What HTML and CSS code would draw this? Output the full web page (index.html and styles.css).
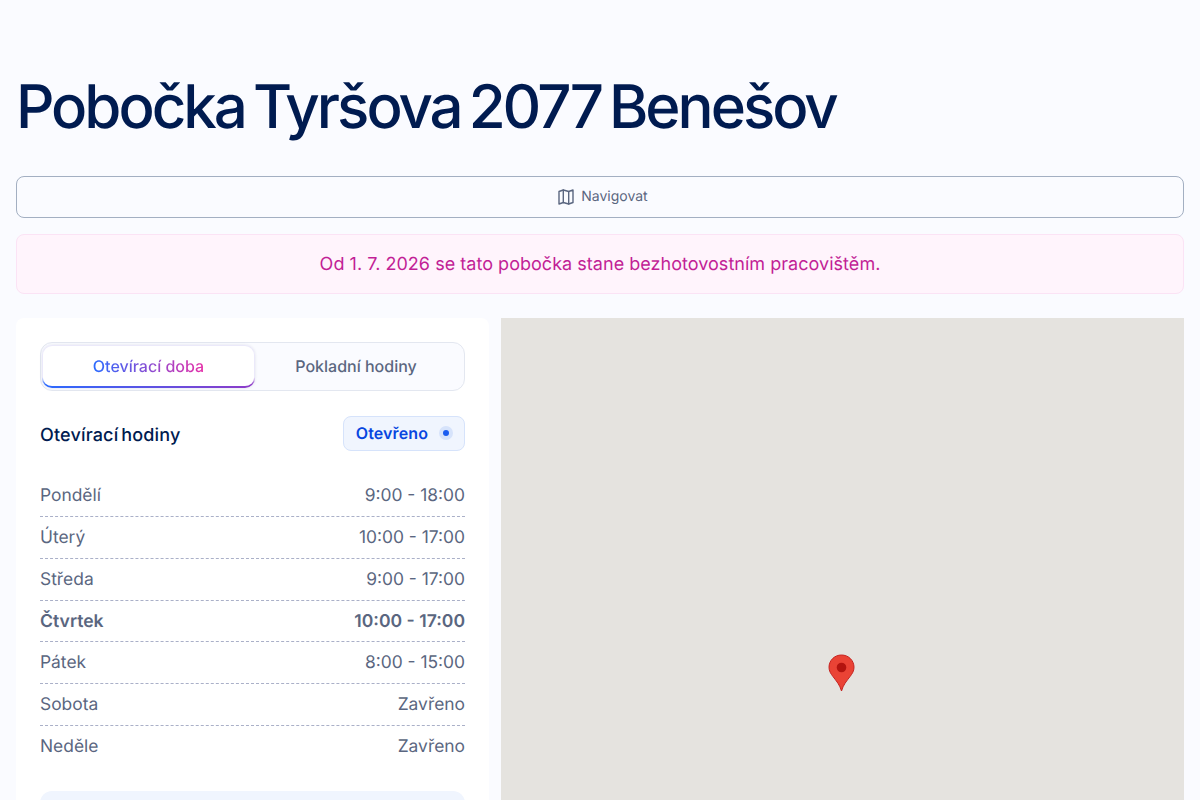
FILE: index.html
```html
<!DOCTYPE html>
<html lang="cs">
<head>
<meta charset="utf-8">
<title>Pobočka Tyršova 2077 Benešov</title>
<link rel="stylesheet" href="styles.css">
</head>
<body>
<main class="page">
  <h1 class="title">Pobočka Tyršova 2077 Benešov</h1>
  <a class="nav-btn" href="#">
    <svg class="nav-icon" viewBox="0 0 18 18" width="18" height="18" fill="none" stroke="currentColor" stroke-width="1.4" stroke-linejoin="round" stroke-linecap="round"><path d="M2 3.500 6.300 2l5.400 1.500L16 2v12.500L11.700 16l-5.400-1.500L2 16z"/><path d="M6.300 2v12.500M11.700 3.500V16"/></svg>
    <span>Navigovat</span>
  </a>
  <div class="notice">Od 1. 7. 2026 se tato pobočka stane bezhotovostním pracovištěm.</div>
  <section class="columns">
    <div class="card">
      <div class="tabs">
        <div class="tab tab-active"><span class="tab-grad">Otevírací doba</span></div>
        <div class="tab tab-other">Pokladní hodiny</div>
      </div>
      <div class="hours-head">
        <h2 class="hours-title">Otevírací hodiny</h2>
        <div class="status">Otevřeno <span class="dot"></span></div>
      </div>
      <ul class="hours">
        <li class="row"><span>Pondělí</span><span>9:00 - 18:00</span></li>
        <li class="row"><span>Úterý</span><span>10:00 - 17:00</span></li>
        <li class="row"><span>Středa</span><span>9:00 - 17:00</span></li>
        <li class="row row-today"><span>Čtvrtek</span><span>10:00 - 17:00</span></li>
        <li class="row"><span>Pátek</span><span>8:00 - 15:00</span></li>
        <li class="row"><span>Sobota</span><span>Zavřeno</span></li>
        <li class="row"><span>Neděle</span><span>Zavřeno</span></li>
      </ul>
      <div class="info-box"></div>
    </div>
    <div class="map">
      <svg class="pin" viewBox="0 0 27 43" width="27" height="43"><path d="M13.500 1C6.400 1 1 6.500 1 13.300c0 3.600 1.700 6.300 4 9.300 3.600 4.700 6.800 8.300 8.500 14.400 1.700-6.100 4.900-9.700 8.500-14.400 2.300-3 4-5.700 4-9.300C26 6.500 20.600 1 13.500 1z" fill="#ea4335" stroke="#c5221f" stroke-width="1"/><circle cx="13.500" cy="13.500" r="4.800" fill="#b3140f"/></svg>
    </div>
  </section>
</main>
</body>
</html>
```
FILE: styles.css
```css
* { box-sizing: border-box; }
html, body { margin: 0; height: 800px; overflow: hidden; }
body { background: #fafbff; font-family: Inter, "Liberation Sans", sans-serif; color: #5a6680; text-rendering: geometricPrecision; }
.page { padding: 68px 16px 0; display: flex; flex-direction: column; }
.title { margin: 0 0 31px; padding-top: 2px; font-family: Inter, sans-serif; font-weight: 500; font-size: 60px; line-height: 75px; letter-spacing: -3px; word-spacing: -5px; color: #001b50; }
.nav-btn { height: 42px; padding: 0 0 2px 5px; border: 1px solid #a3afc2; border-radius: 8px; display: flex; align-items: center; justify-content: center; gap: 6px; font-size: 14px; font-weight: 400; color: #5a6680; text-decoration: none; }
.nav-icon { display: block; margin-top: 2px; }
.notice { margin-top: 16px; height: 60px; display: flex; align-items: center; justify-content: center; background: #fff4fc; border: 1px solid #fbe3f5; border-radius: 8px; color: #c21f96; font-size: 18px; letter-spacing: .03px; }
.columns { margin-top: 24px; display: grid; grid-template-columns: 473px 683px; column-gap: 12px; align-items: start; }
.card { background: #fff; border-radius: 8px; padding: 24px; height: 600px; }
.tabs { height: 49px; border: 1px solid #e3e7f0; border-radius: 12px; padding: 2px 1px; display: flex; background: #fafbff; }
.tab { display: flex; align-items: center; justify-content: center; padding-bottom: 1px; font-size: 16px; font-weight: 500; color: #5a6680; }
.tab-other { flex: 1; padding-right: 6px; }
.tab-active { flex: 0 0 213px; border-style: solid; border-color: transparent; border-width: 1px 1px 2px; border-radius: 10px; padding-bottom: 0; background: linear-gradient(#fff, #fff) padding-box, linear-gradient(#ebe9fa 0 75%, transparent 92%) border-box, linear-gradient(90deg, #2a6bff, #8f3bc8) border-box; box-shadow: 0 0 3px rgba(30, 40, 90, .12); }
.tab-grad { background: linear-gradient(90deg, #2a6bff, #e62fa8); -webkit-background-clip: text; background-clip: text; color: transparent; }
.hours-head { margin-top: 25px; display: flex; align-items: center; justify-content: space-between; }
.hours-title { margin: 0; padding-top: 4px; font-family: Inter, sans-serif; font-size: 18px; font-weight: 500; letter-spacing: .16px; word-spacing: -2px; color: #001b50; }
.status { height: 35px; padding: 0 11px 2px 12px; display: flex; align-items: center; gap: 11px; border: 1px solid #d6e3fb; border-radius: 8px; background: #f0f5fe; color: #0746e0; font-size: 16px; font-weight: 600; letter-spacing: .1px; }
.dot { width: 14px; height: 14px; border-radius: 50%; background: #d6e3fb; display: flex; align-items: center; justify-content: center; }
.dot::after { content: ""; width: 6px; height: 6px; border-radius: 50%; background: #1a5cf0; }
.hours { list-style: none; margin: 24.300px 0 0; padding: 0; }
.row { display: flex; justify-content: space-between; padding: 9px 0 7px; font-size: 17.400px; line-height: 24.800px; border-bottom: 1px dashed #aab0c8; }
.row:last-child { border-bottom: 0; }
.row-today { font-weight: 600; font-size: 17.600px; }
.info-box { margin-top: 24px; height: 100px; background: #f0f5fe; border-radius: 12px; }
.map { height: 600px; background: #e5e3df; display: flex; align-items: flex-start; justify-content: center; padding: 336px 2px 0 0; }
.pin { display: block; }
```
